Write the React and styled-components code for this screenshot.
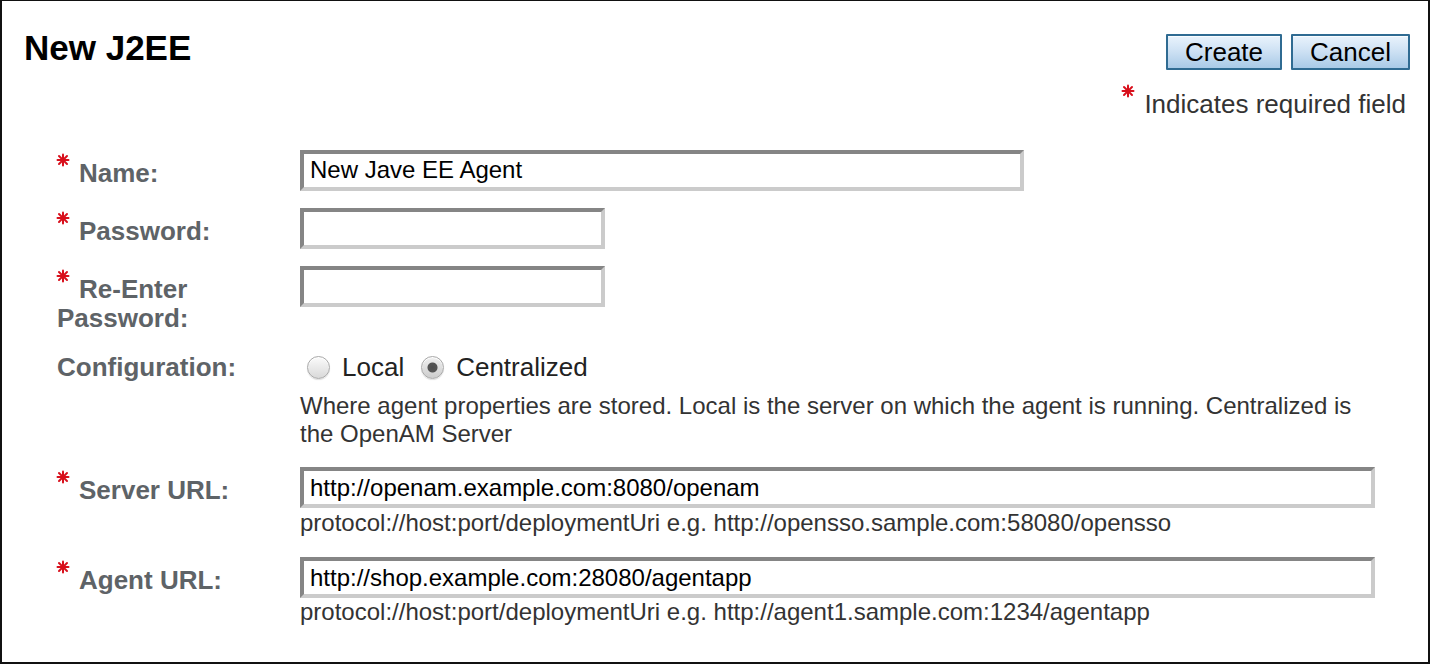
import React from 'react'
import styled, { createGlobalStyle } from 'styled-components'

const GlobalStyle = createGlobalStyle`
  html, body {
    margin: 0;
    padding: 0;
    background: #fff;
  }
  body {
    font-family: "Liberation Sans", Arial, Helvetica, sans-serif;
  }
`

const Frame = styled.div`
  box-sizing: border-box;
  width: 1430px;
  height: 664px;
  border: 2px solid #111;
  border-top-width: 1px;
  background: #fff;
  overflow: hidden;
`

const Header = styled.div`
  display: flex;
  justify-content: space-between;
  align-items: flex-start;
  padding: 27px 18px 0 22px;
`

const Title = styled.h1`
  margin: 0;
  font-size: 35px;
  line-height: 40px;
  font-weight: bold;
  color: #000;
`

const HeaderSide = styled.div`
  display: flex;
  flex-direction: column;
  align-items: flex-end;
  padding-top: 6px;
`

const ButtonBar = styled.div`
  display: flex;
  gap: 9px;
`

const Button = styled.button`
  box-sizing: border-box;
  height: 36px;
  padding: 0 17px;
  border: 2px solid #2f6b92;
  border-radius: 1px;
  background: linear-gradient(#e9f3fc 0%, #cfe2f4 45%, #a9cae7 100%);
  box-shadow: inset 0 1px 0 #f8fcff;
  font-family: "Liberation Sans", Arial, sans-serif;
  font-size: 26px;
  line-height: 30px;
  color: #000;
  cursor: pointer;
`

const RequiredNote = styled.div`
  margin-top: 18px;
  padding-right: 4px;
  font-size: 26px;
  line-height: 30px;
  color: #333;
`

const Star = styled.svg`
  display: inline-block;
  width: 14px;
  height: 14px;
  margin: -4px ${p => p.$space || 9}px 0 -1px;
  vertical-align: 14.5px;
`

const Form = styled.div`
  padding: 0 53px 0 55px;
  margin-top: 31px;
`

const Row = styled.div`
  display: flex;
  align-items: flex-start;
  margin-top: ${p => p.$top || 0}px;
`

const Label = styled.div`
  box-sizing: border-box;
  flex: none;
  width: 243px;
  padding: 7px 40px 0 0;
  font-size: 26px;
  line-height: 30px;
  font-weight: bold;
  color: #5e6367;
`

const Control = styled.div`
  flex: 1;
  display: flex;
  flex-direction: column;
  align-items: flex-start;
  padding-top: ${p => p.$pad || 0}px;
`

const TextField = styled.input`
  box-sizing: border-box;
  width: ${p => p.$w}px;
  height: 41px;
  margin: 0;
  padding: 0 6px;
  border-style: solid;
  border-width: 4px;
  border-color: #858585 #cbcbcb #cbcbcb #858585;
  background: #fff;
  font-family: "Liberation Sans", Arial, sans-serif;
  font-size: 24px;
  color: #000;
  outline: none;
`

const Help = styled.div`
  margin-top: ${p => p.$top || 0}px;
  font-size: 24px;
  line-height: 28px;
  color: #333;
`

const RadioLine = styled.div`
  display: flex;
  align-items: center;
  height: 30px;
  font-size: 26px;
  color: #222;
`

const RadioItem = styled.label`
  display: flex;
  align-items: center;
  margin-right: 10px;
`

const Radio = styled.input`
  appearance: none;
  -webkit-appearance: none;
  box-sizing: border-box;
  width: 23px;
  height: 23px;
  margin: 1px 12px 0 7px;
  border: 1px solid #a9a9a9;
  border-radius: 50%;
  background: linear-gradient(#fbfbfb, #d9d9d9);
  box-shadow: 0 1px 1px rgba(0, 0, 0, 0.12), inset 0 1px 0 #fff;

  &:checked {
    background:
      radial-gradient(circle, #4f4f4f 0, #555 4.5px, transparent 5.5px),
      linear-gradient(#f0f0f0, #cdcdcd);
  }
`

const Asterisk = ({ space }) => (
  <Star viewBox="0 0 14 14" $space={space}>
    <g stroke="#d8101c" strokeWidth="2" strokeLinecap="round">
      <line x1="7" y1="1.5" x2="7" y2="12.5" />
      <line x1="1.5" y1="7" x2="12.5" y2="7" />
      <line x1="3" y1="3" x2="11" y2="11" />
      <line x1="11" y1="3" x2="3" y2="11" />
    </g>
  </Star>
)

const FieldLabel = ({ required, children }) => (
  <Label>
    {required && <Asterisk />}
    {children}
  </Label>
)

const App = () => {
  return (
    <>
      <GlobalStyle />
      <Frame>
        <Header>
          <Title>New J2EE</Title>
          <HeaderSide>
            <ButtonBar>
              <Button>Create</Button>
              <Button>Cancel</Button>
            </ButtonBar>
            <RequiredNote>
              <Asterisk space={9} />
              Indicates required field
            </RequiredNote>
          </HeaderSide>
        </Header>

        <Form>
          <Row>
            <FieldLabel required>Name:</FieldLabel>
            <Control>
              <TextField $w={724} defaultValue="New Jave EE Agent" />
            </Control>
          </Row>

          <Row $top={17}>
            <FieldLabel required>Password:</FieldLabel>
            <Control>
              <TextField $w={305} type="password" />
            </Control>
          </Row>

          <Row $top={17}>
            <FieldLabel required>Re-Enter Password:</FieldLabel>
            <Control>
              <TextField $w={305} type="password" />
            </Control>
          </Row>

          <Row $top={12}>
            <FieldLabel>Configuration:</FieldLabel>
            <Control $pad={7}>
              <RadioLine>
                <RadioItem>
                  <Radio type="radio" name="config" />
                  Local
                </RadioItem>
                <RadioItem>
                  <Radio type="radio" name="config" defaultChecked />
                  Centralized
                </RadioItem>
              </RadioLine>
              <Help $top={10}>
                Where agent properties are stored. Local is the server on which the agent is running. Centralized is the OpenAM Server
              </Help>
            </Control>
          </Row>

          <Row $top={19}>
            <FieldLabel required>Server URL:</FieldLabel>
            <Control>
              <TextField $w={1075} defaultValue="http://openam.example.com:8080/openam" />
              <Help $top={1}>protocol://host:port/deploymentUri e.g. http://opensso.sample.com:58080/opensso</Help>
            </Control>
          </Row>

          <Row $top={20}>
            <FieldLabel required>Agent URL:</FieldLabel>
            <Control>
              <TextField $w={1075} defaultValue="http://shop.example.com:28080/agentapp" />
              <Help>protocol://host:port/deploymentUri e.g. http://agent1.sample.com:1234/agentapp</Help>
            </Control>
          </Row>
        </Form>
      </Frame>
    </>
  )
}

export default App
